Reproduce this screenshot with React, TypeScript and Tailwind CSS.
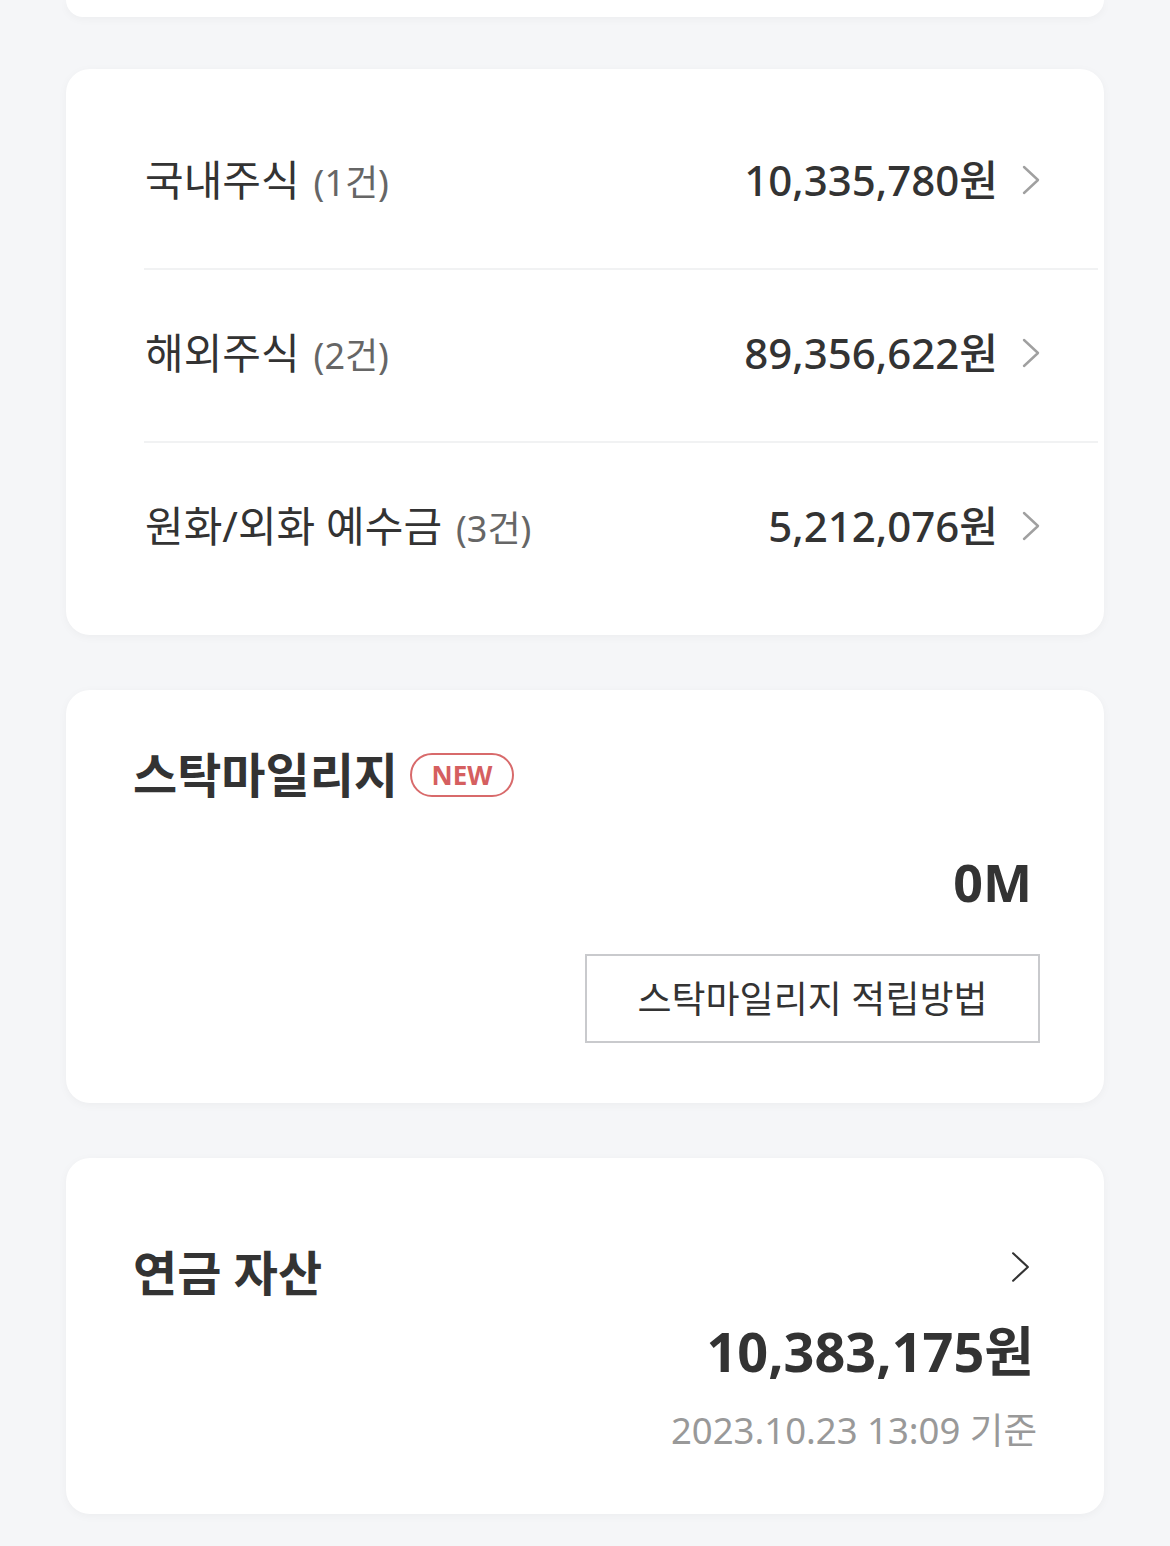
import React from "react";

const FONT = { fontFamily: '"Noto Sans", "Noto Sans CJK KR", sans-serif' };

interface AssetRow {
  label: string;
  count: number;
  amount: string;
}

const rows: AssetRow[] = [
  { label: "국내주식", count: 1, amount: "10,335,780원" },
  { label: "해외주식", count: 2, amount: "89,356,622원" },
  { label: "원화/외화 예수금", count: 3, amount: "5,212,076원" },
];

const Chevron = ({ className, width = 2.4 }: { className?: string; width?: number }) => (
  <svg viewBox="0 0 18 30" className={className} fill="none" stroke="currentColor" strokeWidth={width} strokeLinecap="round" strokeLinejoin="round">
    <path d="M2 2l14 13L2 28" />
  </svg>
);

export default function App() {
  return (
    <div className="min-h-[1546px] bg-[#f5f6f8] px-[66px] pb-[40px] text-[#333]" style={FONT}>
      {/* Previous card fragment */}
      <div className="h-[17px] rounded-b-[24px] bg-white shadow-[0_2px_10px_rgba(0,0,0,0.04)]" />

      <div className="mt-[52px] flex flex-col gap-[55px]">
        {/* Asset rows */}
        <div className="rounded-[24px] bg-white pt-[28px] pb-[21px] shadow-[0_2px_10px_rgba(0,0,0,0.04)]">
          {rows.map((row, idx) => (
            <div key={row.label}>
              {idx > 0 && <div className="ml-[78px] mr-[6px] h-[2px] bg-[#f1f2f3]" />}
              <div className="flex h-[171px] items-center justify-between pb-[6px] pl-[79px] pr-[64px]">
                <div className="flex items-baseline gap-[14px]">
                  <span className="text-[42px] leading-none text-[#333]">{row.label}</span>
                  <span className="text-[36px] leading-none text-[#666]">({row.count}건)</span>
                </div>
                <div className="flex items-center gap-[24px]">
                  <span className="text-[42px] font-medium leading-none text-[#333]">{row.amount}</span>
                  <Chevron className="h-[30px] w-[18px] text-[#a0a0a0]" />
                </div>
              </div>
            </div>
          ))}
        </div>

        {/* Stock mileage */}
        <div className="flex flex-col rounded-[24px] bg-white pt-[55px] pb-[60px] pl-[67px] pr-[64px] shadow-[0_2px_10px_rgba(0,0,0,0.04)]">
          <div className="flex items-center gap-[12px]">
            <h2 className="text-[48px] font-bold leading-[60px] text-[#333]">스탁마일리지</h2>
            <span className="flex h-[44px] w-[104px] items-center justify-center rounded-full border-2 border-[#d86a6b] text-[26px] font-bold leading-none text-[#d55f60]">
              NEW
            </span>
          </div>
          <div className="mt-[45px] pr-[8px] text-right text-[52px] font-bold leading-[64px] text-[#333]">0M</div>
          <div className="mt-[40px] flex justify-end">
            <button className="flex h-[89px] w-[455px] items-center justify-center border-2 border-[#c9cacd] bg-white text-[37px] leading-none text-[#333]">
              스탁마일리지 적립방법
            </button>
          </div>
        </div>

        {/* Pension assets */}
        <div className="flex flex-col rounded-[24px] bg-white pt-[85px] pb-[59px] pl-[67px] pr-[70px] shadow-[0_2px_10px_rgba(0,0,0,0.04)]">
          <div className="flex items-start justify-between">
            <h2 className="text-[48px] font-bold leading-[60px] text-[#333]">연금 자산</h2>
            <Chevron width={2} className="mt-[7px] mr-[4px] h-[34px] w-[19px] text-[#333]" />
          </div>
          <div className="mt-[13px] text-right text-[54px] font-bold leading-[70px] text-[#333]">10,383,175원</div>
          <div className="mt-[19px] -mr-[3px] text-right text-[36.5px] leading-[50px] text-[#999]">2023.10.23 13:09 기준</div>
        </div>
      </div>
    </div>
  );
}
